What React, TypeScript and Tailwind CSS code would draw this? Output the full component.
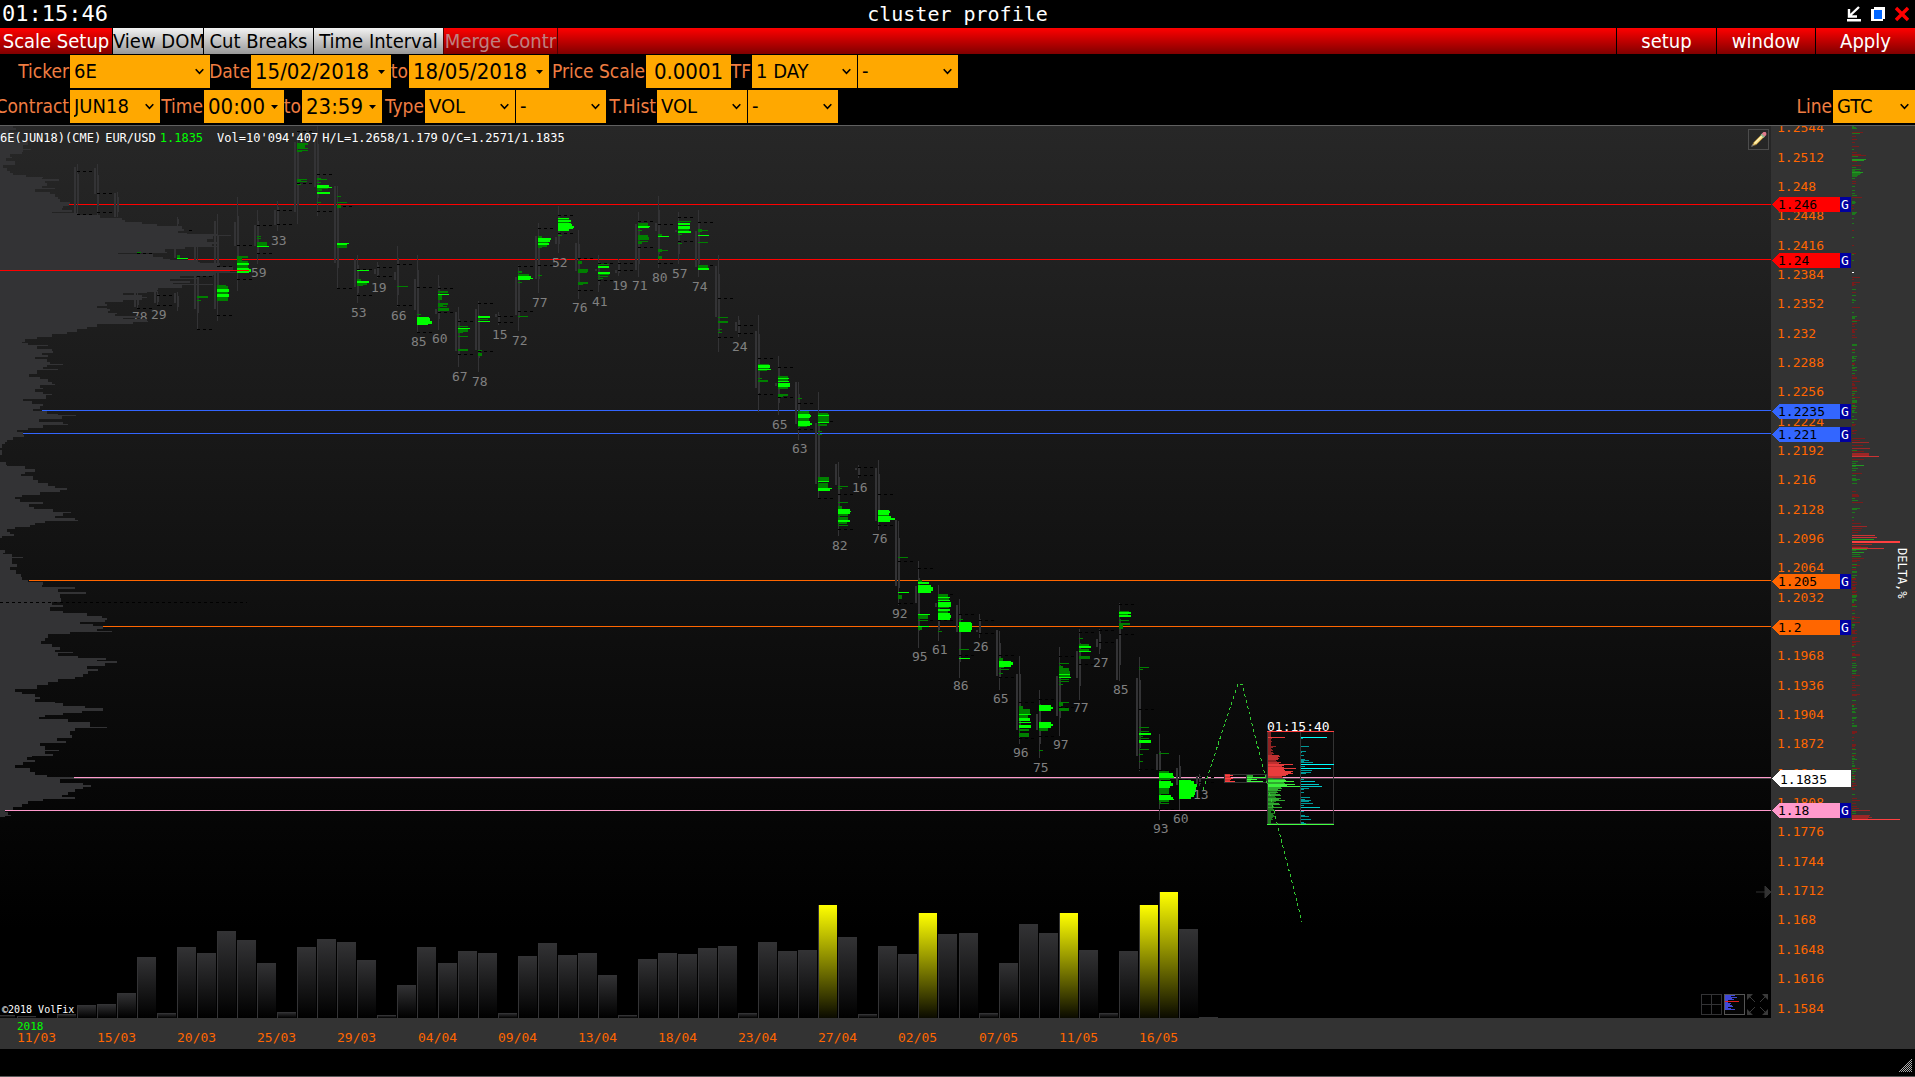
import { useState } from "react";
import type { ReactNode } from "react";

/* ---------- chart data (y measured in window pixels, shifted by TOP when drawn) ---------- */

const TOP = 126;
const FLOOR = 1018;
const MONO = "'DejaVu Sans Mono', 'Liberation Mono', monospace";

type Pt = [number, number];

/* Volume profile outline: x in thirds of a pixel, y in each list's own step */
const profileUpper: Pt[] = [[3,40],[10,48],[15,28],[22,55],[30,60],[40,48],[50,85],[60,70],[72,93],[75,70],[82,65],[88,30],[95,35],[100,18],[107,45],[115,45],[120,8],[128,20],[138,30],[145,40],[150,78],[155,130],[160,125],[163,177],[168,135],[175,140],[183,125],[190,165],[193,105],[200,150],[207,165],[215,175],[222,180],[232,210],[238,207],[243,190],[250,185],[255,215],[262,155],[265,235],[271,300],[278,365],[285,375],[292,425],[298,470],[303,545],[312,552],[318,535],[325,560],[328,650],[331,693],[334,640],[343,620],[350,655],[357,635],[362,655],[367,555],[372,495],[380,500],[384,355],[388,460],[396,490],[402,510],[406,590],[410,600],[415,660],[420,650],[427,700],[434,690],[440,710],[443,645],[450,640],[453,540],[458,590],[462,510],[468,570],[474,520],[477,640],[481,545],[489,475],[495,470],[500,440],[504,370],[510,425],[516,440],[520,425],[526,370],[530,315],[536,320],[543,292],[548,320],[553,330],[557,325],[563,350],[568,345],[573,420],[578,370],[583,440],[588,445],[592,400],[598,290],[606,260],[612,230],[620,200],[628,155],[637,110],[643,75],[650,65],[655,85],[660,145],[663,110],[672,155],[678,158],[683,125],[690,145],[696,105],[703,140],[710,150],[717,190],[720,140],[727,130],[733,175],[736,110],[747,88],[755,120],[762,145],[770,155],[776,165],[781,120],[788,130]];
const profileLower: Pt[] = [[0,130],[8,140],[11,190],[14,140],[22,175],[25,100],[36,88],[42,150],[46,105],[52,150],[60,165],[63,145],[68,105],[75,130],[81,155],[84,138],[93,68],[98,95],[105,130],[110,120],[116,100],[122,140],[128,175],[131,228],[134,185],[141,118],[147,190],[152,203],[155,130],[161,85],[167,52],[172,70],[178,72],[184,38],[190,20],[195,15],[200,5],[210,1],[215,5],[225,0],[238,0],[243,18],[250,22],[253,75],[258,105],[265,75],[271,62],[276,100],[285,115],[293,145],[300,165],[305,200],[309,180],[314,120],[320,65],[325,45],[330,60],[338,130],[341,88],[350,103],[355,160],[360,212],[363,190],[371,165],[376,225],[379,233],[382,135],[388,105],[393,90],[397,45],[401,22],[408,30],[413,42],[418,5],[422,0],[450,0],[452,15],[458,10],[462,35],[468,68],[471,35],[484,50],[492,30],[500,48],[508,62],[516,65],[522,85],[528,130],[534,125],[540,225],[543,175],[552,257],[555,180],[565,183],[574,155],[582,190],[588,150],[597,190],[602,260],[608,305],[612,320],[618,315],[622,240],[628,280],[633,310],[638,290],[644,335],[647,210],[651,145],[660,135],[668,122],[675,155],[682,180],[688,165],[693,218],[696,175],[703,235],[708,318],[712,290],[716,350],[720,315],[728,260],[734,293],[738,265],[747,250],[753,225],[758,175],[765,145],[773,110],[778,110],[782,45],[788,65],[794,105],[800,120],[806,105],[812,165],[816,190],[822,255],[828,310],[834,245],[838,190],[843,135],[848,118],[853,205],[860,270],[866,270],[872,322],[875,225],[882,210],[890,217],[897,170],[906,197],[909,120],[917,135],[926,178],[930,135],[937,160],[940,95],[944,80],[950,105],[955,70],[963,45],[970,90],[978,105],[985,140],[990,222],[996,180],[1004,250],[1010,272],[1014,250],[1020,225],[1027,205],[1033,185],[1039,225],[1043,130],[1049,85],[1055,65],[1062,40],[1070,15],[1075,25],[1080,32],[1083,15],[1087,0]];

const profile: Pt[] = [
  ...profileUpper.map(([p, x]): Pt => [Math.round(125 + p / 3), Math.round(x / 3)]),
  ...profileLower.map(([p, x]): Pt => [Math.round(360 + p / 2.376), Math.round(x / 3)]).filter(([y]) => y > 388),
];
const profilePath =
  `M0 ${TOP}` + profile.map(([y, x]) => `V${y}H${x}`).join("") + "V818H0Z";

/* bars: [y, height, width, bright] */
type Bar = [number, number, number, 0 | 1];
interface Candle {
  x: number;
  wick: Pt;
  body: Pt;
  va: number[];
  bars?: Bar[];
  label?: string;
  base?: number;
}
const c = (x: number, wick: Pt, body: Pt, va: number[], bars: Bar[] = [], label?: string, base?: number): Candle => ({ x, wick, body, va, bars, label, base });

const candles: Candle[] = [
  c(77,[164,214],[167,213],[171,214]),
  c(97,[164,217],[168,194],[193,212]),
  c(117,[192,217],[193,217],[]),
  c(137,[292,308],[293,307],[253,308],[[252,1,4,0]]),
  c(157,[291,305],[291,303],[295,305],[],"29",319),
  c(177,[217,226],[249,258],[],[[255,3,3,0],[258,1,11,1]]),
  c(177,[292,311],[293,303],[]),
  c(197,[247,329],[247,309],[276,329],[[296,2,11,0],[300,1,4,0]]),
  c(217,[214,321],[221,309],[266,315],[[285,1,9,0],[286,15,11,0],[289,3,12,1],[294,3,12,1]]),
  c(237,[197,291],[222,246],[245,279],[[256,2,11,0],[258,4,5,0],[261,7,11,0],[263,2,12,1],[268,1,12,1],[269,3,14,1],[272,1,12,1]],"59",277),
  c(257,[210,264],[225,246],[225,253],[[236,1,4,0],[238,1,4,0],[242,4,10,0],[246,1,12,1]],"33",245),
  c(277,[201,231],[210,225],[210,224]),
  c(297,[131,224],[142,212],[131,183],[[143,2,11,0],[145,3,8,0],[148,1,11,0],[150,1,11,0],[151,1,5,0],[179,1,10,0],[180,2,4,0],[181,1,10,0],[184,1,4,0]]),
  c(317,[126,216],[142,187],[174,211],[[178,2,4,0],[179,1,10,0],[182,1,4,0],[185,2,12,1],[187,1,15,1],[188,1,11,0],[189,2,5,0],[192,2,13,1],[202,1,4,0]]),
  c(337,[186,288],[186,263],[206,288],[[196,1,4,0],[202,1,10,0],[205,3,4,0],[243,1,12,1],[244,1,10,1],[245,3,10,0]]),
  c(357,[255,303],[259,287],[269,295],[[270,1,12,1],[279,2,4,0],[281,2,12,1],[283,2,10,0],[285,1,6,0]],"53",317),
  c(377,[262,278],[269,274],[267,276],[],"19",292),
  c(397,[246,307],[272,280],[264,305],[[286,1,11,0]],"66",320),
  c(417,[255,332],[279,310],[287,332],[[314,1,4,0],[317,1,12,1],[318,3,13,1],[321,3,15,1],[324,1,11,1]],"85",346),
  c(438,[275,330],[309,314],[288,312],[[291,2,10,0],[294,1,11,1],[295,5,4,0],[303,2,10,0],[305,2,5,0],[306,1,9,0],[308,3,11,0]],"60",343),
  c(458,[307,367],[312,351],[321,354],[[326,1,10,0],[328,1,12,1],[329,3,10,0],[332,1,5,0],[336,1,10,0],[349,2,10,0]],"67",381),
  c(478,[301,372],[309,350],[303,351],[[316,2,12,1],[319,1,10,0],[321,1,12,1],[350,1,4,0],[353,3,4,0]],"78",386),
  c(498,[312,325],[314,317],[316,322],[],"15",339),
  c(518,[265,331],[277,315],[266,311],[[271,2,4,0],[274,2,11,0],[276,2,13,1],[278,1,15,1],[279,1,12,1],[282,1,4,0],[316,1,10,0]],"72",345),
  c(538,[223,293],[236,279],[228,265],[[236,2,4,0],[238,2,13,1],[240,2,12,1],[242,1,10,0],[243,2,11,1],[245,2,9,0],[247,1,4,0],[275,1,4,0]],"77",307),
  c(558,[206,253],[237,244],[215,233],[[218,1,11,1],[219,1,11,0],[220,2,13,1],[222,1,11,0],[223,1,13,1],[224,2,14,1],[226,2,16,1],[228,1,15,1],[229,2,11,1],[235,1,4,0]],"52",267),
  c(578,[230,299],[243,271],[258,290],[[261,3,4,0],[269,3,10,0],[272,1,9,0],[282,2,10,0],[284,1,5,0]],"76",312),
  c(598,[255,292],[269,271],[263,280],[[264,1,11,0],[266,2,11,1],[272,2,12,1],[274,1,11,0],[276,1,10,0],[278,1,5,0]],"41",306),
  c(618,[259,276],[270,273],[263,270],[],"19",290),
  c(638,[212,277],[224,270],[221,247],[[223,3,10,0],[226,1,12,1],[227,1,11,1],[230,1,4,0],[235,3,10,0],[237,3,11,0],[241,1,10,0],[242,2,4,0]],"71",290),
  c(658,[196,268],[223,231],[224,263],[[234,2,4,0],[236,1,11,1],[250,1,10,0],[249,3,4,0],[256,3,4,0]],"80",282),
  c(678,[212,264],[230,232],[217,241],[[221,1,13,0],[223,2,12,1],[226,3,12,1],[229,2,11,0],[231,2,13,1],[234,1,4,0],[243,1,4,0]],"57",278),
  c(698,[210,277],[231,267],[222,265],[[229,3,4,0],[230,1,10,0],[235,1,11,1],[242,1,10,0],[265,3,10,0],[268,2,11,1]],"74",291),
  c(718,[255,352],[266,317],[298,337],[[317,1,10,0],[321,2,10,0],[329,1,4,0],[332,1,4,0]]),
  c(738,[316,337],[322,331],[325,333],[],"24",351),
  c(758,[315,412],[331,388],[358,394],[[364,6,11,0],[365,3,12,1],[369,1,13,1],[370,1,9,0],[378,1,4,0],[380,2,10,0]]),
  c(778,[356,415],[383,386],[367,397],[[376,6,10,0],[378,1,11,1],[381,1,11,1],[383,4,12,1],[387,2,10,0],[394,2,10,0],[396,1,5,0]],"65",429),
  c(798,[382,440],[382,424],[403,429],[[398,1,4,0],[411,3,11,0],[414,1,12,1],[415,2,13,1],[417,1,12,1],[418,3,11,0],[421,2,12,1],[423,2,14,1],[425,1,12,1],[426,1,9,0]],"63",453),
  c(818,[392,499],[423,484],[421,498],[[413,1,10,0],[414,9,11,0],[415,1,11,1],[422,1,11,1],[424,2,9,0],[431,1,4,0],[434,1,4,0],[477,5,11,0],[481,1,11,1],[483,5,10,0],[488,1,14,1],[489,2,12,1]]),
  c(838,[462,536],[464,485],[494,529],[[486,1,10,0],[488,1,4,0],[502,1,10,0],[506,3,4,0],[509,2,12,1],[511,1,13,1],[512,2,12,1],[514,2,10,0],[517,3,10,0],[520,2,12,1],[522,2,9,0],[525,1,10,0]],"82",550),
  c(858,[465,478],[468,470],[467,475],[],"16",492),
  c(878,[460,530],[468,521],[494,525],[[510,1,11,1],[511,2,12,1],[513,2,11,1],[515,1,11,0],[516,2,13,1],[518,2,17,1],[520,2,12,1]],"76",543),
  c(898,[521,605],[520,586],[561,603],[[557,1,10,0],[592,1,11,1],[595,4,4,0]],"92",618),
  c(918,[561,648],[586,603],[568,620],[[580,2,4,0],[582,2,11,1],[585,2,13,1],[587,4,15,1],[591,2,13,1],[614,1,12,1],[615,2,10,0],[617,2,10,0],[620,1,10,0],[626,1,11,1],[627,3,4,0]],"95",661),
  c(938,[585,641],[603,607],[594,620],[[594,3,10,0],[597,1,12,1],[598,2,11,0],[600,1,12,1],[602,5,13,1],[607,1,11,0],[609,2,12,1],[611,2,10,0],[613,2,12,1],[615,3,13,1],[618,2,12,1],[631,1,4,0]],"61",654),
  c(959,[599,678],[605,632],[614,655],[[619,1,4,0],[622,1,12,1],[623,7,13,1],[630,2,12,1],[649,1,10,0],[658,1,11,1]],"86",690),
  c(979,[614,638],[630,632],[620,633],[],"26",651),
  c(999,[631,690],[630,676],[655,677],[[658,3,4,0],[661,1,12,1],[662,3,14,1],[665,2,12,1],[667,1,5,0],[669,1,10,0],[673,1,4,0]],"65",703),
  c(1019,[656,744],[674,730],[702,738],[[706,3,4,0],[709,5,11,0],[714,1,12,1],[715,3,9,0],[718,3,11,1],[722,1,12,1],[725,3,12,1],[729,2,10,0],[733,4,10,0]],"96",757),
  c(1039,[690,758],[714,730],[699,736],[[705,2,12,1],[707,2,14,1],[709,2,12,1],[722,2,12,1],[724,2,14,1],[726,2,12,1],[728,3,9,0],[750,1,4,0]],"75",772),
  c(1059,[647,736],[676,716],[656,707],[[663,1,10,0],[666,2,4,0],[668,3,10,0],[671,6,11,0],[674,1,11,1],[677,1,12,1],[679,1,10,0],[681,1,10,0],[684,1,4,0],[702,1,10,0],[703,3,4,0],[708,3,10,0]],"97",749),
  c(1079,[629,700],[651,678],[632,664],[[638,1,4,0],[644,2,10,0],[646,2,12,1],[649,2,10,0],[651,1,12,1],[656,3,11,0]],"77",712),
  c(1099,[629,654],[639,647],[630,642],[],"27",667),
  c(1119,[603,681],[639,680],[604,634],[[611,1,10,0],[612,2,12,1],[614,1,9,0],[615,2,12,1],[620,1,10,0],[623,2,11,0],[625,4,4,0]],"85",694),
  c(1139,[657,771],[678,756],[709,769],[[667,1,10,0],[669,1,4,0],[727,1,10,0],[731,1,10,0],[733,2,12,1],[736,1,4,0],[738,1,10,0],[740,3,12,1],[749,1,10,0],[754,1,4,0],[761,1,4,0]]),
  c(1159,[734,820],[754,770],[770,809],[[753,1,10,0],[771,2,10,0],[773,3,14,1],[776,2,15,1],[778,2,11,0],[781,2,12,1],[783,3,14,1],[786,2,11,1],[788,6,10,0],[790,2,4,0],[795,2,12,1],[797,2,14,1],[799,1,15,1],[800,2,10,0],[803,1,10,0]],"93",833),
  c(1179,[755,810],[768,785],[779],[[780,2,12,1],[781,3,15,1],[784,3,18,1],[787,5,17,1],[792,3,16,1],[795,2,15,1],[797,2,12,1]],"60",823),
  c(1199,[774,786],[776,784],[777,782],[],"13",799),
];

/* Volume histogram: [x, height, highlighted] */
const volumes: [number, number, (0 | 1)?][] = [
  [-4,3],[17,2],[57,4],[77,13],[97,14],[117,25],[137,61],[157,5],[177,71],[197,65],[217,87],[237,78],[257,55],[277,6],[297,71],[317,79],[337,76],[357,58],[377,3],[397,33],[417,71],[438,55],[458,67],[478,65],[498,5],[518,62],[538,75],[558,63],[578,65],[598,43],[618,3],[638,59],[658,65],[678,64],[698,70],[718,72],[738,5],[758,76],[778,67],[798,68],[818,113,1],[838,81],[858,4],[878,72],[898,64],[918,105,1],[938,84],[959,85],[979,5],[999,55],[1019,94],[1039,85],[1059,105,1],[1079,68],[1099,5],[1119,67],[1139,113,1],[1159,126,1],[1179,89],[1199,1],
];

const dates: [number, string][] = [
  [17,"11/03"],[97,"15/03"],[177,"20/03"],[257,"25/03"],[337,"29/03"],[418,"04/04"],[498,"09/04"],[578,"13/04"],[658,"18/04"],[738,"23/04"],[818,"27/04"],[898,"02/05"],[979,"07/05"],[1059,"11/05"],[1139,"16/05"],
];

interface Level { price: string; line: number; from: number; tag: number; color: string }
const levels: Level[] = [
  { price: "1.246", line: 204, from: 69, tag: 197, color: "#ff0000" },
  { price: "1.24", line: 259, from: 188, tag: 253, color: "#ff0000" },
  { price: "1.2235", line: 410, from: 42, tag: 404, color: "#3366ff" },
  { price: "1.221", line: 433, from: 23, tag: 427, color: "#3366ff" },
  { price: "1.205", line: 580, from: 29, tag: 574, color: "#ff6600" },
  { price: "1.2", line: 626, from: 103, tag: 620, color: "#ff6600" },
  { price: "1.18", line: 810, from: 5, tag: 803, color: "#ff99cc" },
];

const prices = Array.from({ length: 31 }, (_, i) => ({
  text: String(Number((1.2544 - i * 0.0032).toFixed(4))),
  y: Math.round(132.3 + i * 29.34),
}));

/* Delta histogram: [y, width, red] */
const deltas: [number, number, 0 | 1][] = [
  [126,2,0],[127,4,0],[128,5,0],[132,11,1],[133,8,0],[136,4,1],[139,5,1],[142,3,1],[146,7,1],[149,2,0],[152,5,1],[154,9,1],[155,14,1],[156,6,0],[159,14,0],[160,12,0],[161,5,1],[165,9,1],[167,4,0],[169,9,0],[170,3,0],[171,8,0],[172,11,0],[173,9,0],[174,8,0],[175,6,0],[176,5,0],[178,3,0],[181,4,1],[183,4,1],[186,3,0],[190,3,0],[193,3,0],[195,5,0],[197,10,1],[201,3,0],[202,4,0],[203,3,0],[205,2,1],[208,2,1],[212,5,0],[213,4,0],[214,3,0],[218,2,0],[223,2,0],[230,2,1],[237,2,0],[245,2,1],[253,4,1],[254,2,0],[260,2,0],
  [438,13,1],[440,8,1],[442,17,1],[445,11,1],[448,18,1],[450,5,0],[451,12,1],[453,17,1],[454,17,1],[455,17,1],[456,27,1],[459,12,1],[461,6,0],[463,4,0],[465,12,0],[466,4,0],[468,6,0],[470,4,0],[473,10,1],[475,4,0],[478,4,0],[479,8,0],[480,5,0],[483,5,0],[491,4,1],[494,6,1],[495,7,1],[496,7,1],[498,3,0],[500,6,0],[502,11,1],[508,8,0],[509,5,0],[512,3,0],[517,2,0],[520,2,1],[523,9,1],[526,15,1],[528,10,1],[530,9,1],[532,6,1],[535,23,1],[537,25,1],[539,22,0],[541,48,1],[542,48,1],[544,20,1],[546,9,1],[547,16,1],[548,32,1],[549,15,0],[550,4,0],[552,12,0],[554,8,0],[556,9,0],[558,12,1],[560,8,1],[561,5,1],
  [794,3,0],[798,5,1],[800,8,1],[803,4,1],[806,5,1],[808,7,1],[810,18,1],[811,4,0],[813,4,0],[815,18,1],[816,17,1],[817,20,1],[818,16,1],[819,48,1],
];
const quietDeltas: [number, number, 0 | 1][] = [];
for (let y = 276; y < 790; y += 1) {
  if (y > 434 && y < 563) continue;
  const h = (y * 7919 + ((y * y) % 97) * 31) % 23;
  if (h < 12) quietDeltas.push([y, h < 1 ? 8 : h < 4 ? 5 : 2 + (h % 3), Math.floor(y / 17) % 3 === 1 || h % 5 === 0 ? 1 : 0]);
}

const deltaColor = (w: number, red: 0 | 1) =>
  red ? (w > 40 ? "#ff4040" : w > 22 ? "#cc3333" : w > 14 ? "#9c2626" : "#781b1b") : w > 10 ? "#219a21" : "#1c781c";

/* Order-flow box: keyed rows in thirds of a pixel */
const askRows: Pt[] = [[515,8],[522,8],[531,55],[534,12],[545,10],[558,28],[561,15],[575,18],[585,37],[590,35],[598,30],[605,38],[612,78],[615,48],[621,50],[624,85],[628,55],[634,75],[640,78],[643,60],[648,45],[653,0]];
const bidRows: Pt[] = [[655,20],[658,55],[663,85],[667,50],[672,88],[676,60],[679,97],[682,45],[688,30],[691,45],[694,30],[702,38],[708,28],[714,38],[720,55],[723,25],[730,35],[734,20],[741,42],[744,20],[753,12],[760,22],[766,20],[775,15],[780,10],[792,0]];
const expand = (rows: Pt[]) => {
  const out: Pt[] = [];
  for (let i = 0; i < rows.length - 1; i++)
    for (let y = Math.round(560 + rows[i][0] / 3); y < Math.round(560 + rows[i + 1][0] / 3); y++)
      out.push([y, Math.max(3, Math.round(rows[i][1] / 3) - ((y * 5) % 3))]);
  return out;
};
const speedRows: Pt[] = [[532,78],[535,5],[559,24],[574,15],[578,4],[586,8],[598,12],[601,24],[604,9],[607,35],[613,100],[619,12],[625,90],[631,33],[637,30],[640,15],[658,8],[664,42],[672,55],[679,62],[685,24],[688,10],[697,10],[712,27],[718,12],[721,30],[724,25],[730,35],[736,8],[742,57],[754,8],[766,12],[769,24],[778,30],[787,8],[790,15]];

const askColor = (w: number) => (w > 15 ? "#e83c3c" : w > 9 ? "#c03030" : "#8e2323");
const bidColor = (w: number) => (w > 17 ? "#3cf03c" : w > 9 ? "#2fa82f" : "#217a21");

/* ---------- chart ---------- */

function ChartCanvas() {
  return (
    <svg className="absolute inset-0 h-full w-full" shapeRendering="crispEdges" role="img" aria-label="Cluster profile chart">
      <defs>
        <linearGradient id="vol" x1="0" y1="0" x2="0" y2="1">
          <stop offset="0" stopColor="#333335" />
          <stop offset="1" stopColor="#000" />
        </linearGradient>
        <linearGradient id="volHot" x1="0" y1="0" x2="0" y2="1">
          <stop offset="0" stopColor="#ffff00" />
          <stop offset="1" stopColor="#0a0a00" />
        </linearGradient>
      </defs>
      <svg y={-TOP} width="100%" height="1200" overflow="visible">
        <g fontFamily={MONO} fontSize="13" fill="#808080">
          <text x="132" y="321">78</text>
        </g>
        <path d={profilePath} fill="#333335" />
        <line x1="0" x2="247" y1="602.5" y2="602.5" stroke="#000" strokeDasharray="3 3" />

        {levels.map((l) => (
          <rect key={l.price} x={l.from} y={l.line} width="100%" height="1" fill={l.color} />
        ))}
        <rect x="74" y="777" width="100%" height="1" fill="#ff99cc" />
        <rect x="74" y="778" width="100%" height="1" fill="#444" />

        {candles.map((k, i) => (
          <g key={i}>
            <rect x={k.x - 3} y={k.body[0]} width="2" height={k.body[1] - k.body[0]} fill="#333335" />
            <rect x={k.x} y={k.wick[0]} width="1" height={k.wick[1] - k.wick[0]} fill="#333335" />
            <rect x={k.x} y={k.wick[0] + (k.wick[1] - k.wick[0]) * 0.2} width="2" height={(k.wick[1] - k.wick[0]) * 0.6} fill="#333335" />
            {k.va.map((y) => (
              <line key={y} x1={k.x} x2={k.x + 15} y1={y + 0.5} y2={y + 0.5} stroke="#000" strokeDasharray="3 3" />
            ))}
            {k.bars?.map(([y, h, w, b], j) => (
              <rect key={j} x={k.x} y={y} width={w} height={h} fill={b ? "#00ff00" : "#008000"} />
            ))}
          </g>
        ))}
        <rect x="189" y="230" width="3" height="1" fill="#000" />
        <rect x="0" y="270" width="249" height="1" fill="#ff0000" />

        <g fontFamily={MONO} fontSize="13" fill="#808080">
          {candles.map((k, i) => k.label && (
            <text key={i} x={k.label === "59" ? 251 : k.label === "33" ? 271 : k.x - 6} y={k.base}>{k.label}</text>
          ))}
        </g>

        {volumes.map(([x, h, hot]) => (
          <g key={x}>
            <rect x={x} y={FLOOR - h} width="19" height={h} fill={hot ? "url(#volHot)" : "url(#vol)"} />
            <rect x={x} y={FLOOR - h} width="1" height={h} fill="#333335" />
            {!hot && <rect x={x} y={FLOOR - h} width="19" height="1" fill="#333335" />}
          </g>
        ))}

        {/* order-flow boxes */}
        <rect x="1224.5" y="774.5" width="22" height="8" fill="none" stroke="#333" />
        <rect x="1246.5" y="774.5" width="20" height="8" fill="none" stroke="#333" />
        {[[774,5],[775,8],[776,5],[777,6],[778,8],[779,6],[780,5],[781,10]].map(([y, w]) => (
          <rect key={y} x="1225" y={y} width={w} height="1" fill={w > 7 ? "#ff4040" : "#d03535"} />
        ))}
        {[[775,6],[776,6],[777,18],[778,5],[779,10],[780,4],[781,16]].map(([y, w]) => (
          <rect key={y} x="1247" y={y} width={w} height="1" fill={w > 9 ? "#40ff40" : "#2fa82f"} />
        ))}
        <rect x="1267.5" y="731.5" width="33" height="92" fill="none" stroke="#333" />
        <rect x="1300.5" y="731.5" width="33" height="92" fill="none" stroke="#333" />
        {expand(askRows).map(([y, w]) => <rect key={y} x="1268" y={y} width={w} height="1" fill={askColor(w)} />)}
        {expand(bidRows).map(([y, w]) => <rect key={y} x="1268" y={y} width={w} height="1" fill={bidColor(w)} />)}
        {speedRows.map(([p, w]) => (
          <rect key={p} x="1301" y={Math.round(559.5 + p / 3)} width={Math.round(w / 3)} height="1" fill={w > 70 ? "#00ffff" : w > 40 ? "#00c8c8" : "#009999"} />
        ))}
        <rect x="1267" y="731" width="67" height="1" fill="#ff4040" />
        <rect x="1267" y="824" width="67" height="1" fill="#40ff40" />
        <path d="M1203 790 L1238 684 H1242 L1302 922" fill="none" stroke="#32cd32" strokeDasharray="3 3" />
        <text x="1267" y="731" fontFamily={MONO} fontSize="13" fill="#fff">01:15:40</text>
      </svg>
    </svg>
  );
}

function PriceAxis() {
  return (
    <svg className="absolute inset-0 h-full w-full" shapeRendering="crispEdges" role="img" aria-label="Price axis">
      <g transform={`translate(-1771 ${-TOP})`} fontFamily={MONO} fontSize="13">
        {prices.map((p) => <text key={p.text} x="1777" y={p.y} fill="#ff6600">{p.text}</text>)}
        {[...quietDeltas, ...deltas].map(([y, w, red], i) => (
          <rect key={i} x="1852" y={y} width={w} height="1" fill={deltaColor(w, red)} />
        ))}
        <rect x="1852" y="272" width="2" height="1" fill="#fff" />
        {levels.map((l) => (
          <g key={l.price}>
            <path d={`M1772 ${l.tag + 7.5}l7 -7.5H1840v15H1779z`} fill={l.color} />
            <rect x="1840" y={l.tag} width="11" height="15" fill="#0000a0" />
            <text x="1778" y={l.tag + 12} fill="#000">{l.price}</text>
            <text x="1841" y={l.tag + 12} fill="#fff">G</text>
          </g>
        ))}
        <path d="M1772 778.500l8 -8.500H1851v17H1780z" fill="#fff" />
        <text x="1780" y="784" fill="#000">1.1835</text>
        <text transform="translate(1898 548) rotate(90)" fontSize="12" fill="#fff">DELTA,%</text>
      </g>
    </svg>
  );
}

/* ---------- icons ---------- */

const PencilIcon = () => (
  <svg width="19" height="19" viewBox="0 0 19 19">
    <path d="M3 16l2-4 8-8 2.500 2.500-8 8z" fill="#f0d27a" stroke="#8a6a2a" strokeWidth="0.8" />
    <path d="M5.500 13.500l8-8" stroke="#fff3b8" strokeWidth="1.200" />
    <path d="M11.500 5L13 3.500l3 3L14.500 8z" fill="#8fb58f" />
    <path d="M12.800 3.800l1.700-1.700h2l.8.800v2l-1.600 1.600z" fill="#e07a8c" />
    <path d="M2 17l1.400-3 1.700 1.700z" fill="#777" />
  </svg>
);
const GridIcon = () => (
  <svg width="21" height="21" viewBox="0 0 21 21" fill="none" stroke="#333335" shapeRendering="crispEdges">
    <path d="M.5.5h20v20H.5zM10.500 0v21M0 10.500h21" />
  </svg>
);
const ProfileIcon = () => (
  <svg width="21" height="21" viewBox="0 0 21 21" shapeRendering="crispEdges">
    <rect x=".5" y=".5" width="20" height="20" fill="#050505" stroke="#555" />
    <path d="M1 1h10v1H1zM1 2h6v1H1zM1 3h12v1H1zM1 4h7v1H1zM1 5h9v1H1zM1 6h3v1H1zM1 8h3v1H1zM1 9h6v1H1zM1 10h5v1H1zM1 11h7v1H1zM1 12h8v1H1zM1 13h3v1H1zM1 14h6v1H1zM1 15h10v1H1z" fill="#4048d8" />
    <path d="M1 7h14v1H1z" fill="#e02020" />
  </svg>
);
const ExpandIcon = () => (
  <svg width="21" height="21" viewBox="0 0 21 21">
    <path d="M3 3l5 5M18 3l-5 5M3 18l5-5M18 18l-5-5" stroke="#3a3a3a" />
    <path d="M0 0h6L0 6zM21 0v6l-6-6zM0 21v-6l6 6zM21 21h-6l6-6z" fill="#3a3a3a" />
  </svg>
);

/* ---------- form controls ---------- */

const fieldBox = "relative h-[33px] shrink-0 bg-[#ffa800]";
const valueText = "h-full w-full appearance-none rounded-none bg-transparent pl-1 leading-[33px] text-black outline-none";

function Caption({ htmlFor, width, children }: { htmlFor: string; width: string; children: ReactNode }) {
  return (
    <label htmlFor={htmlFor} className={`${width} flex shrink-0 items-center justify-end whitespace-nowrap pr-px text-[19px] text-[#ef7d42]`}>
      {children}
    </label>
  );
}

function Choice({ id, width, value, label }: { id: string; width: string; value: string; label?: string }) {
  return (
    <div className={`${fieldBox} ${width}`}>
      <select id={id} aria-label={label} defaultValue={value} className={`${valueText} text-[20px]`}>
        <option>{value}</option>
      </select>
      <svg className="pointer-events-none absolute top-3 right-1.5" width="9" height="9" viewBox="0 0 9 9" fill="none" stroke="#000" strokeWidth="1.600">
        <path d="M.7 2.300l3.800 4 3.800-4" />
      </svg>
    </div>
  );
}

function Picker({ id, width, value, label }: { id: string; width: string; value: string; label?: string }) {
  const [v, setV] = useState(value);
  return (
    <div className={`${fieldBox} ${width} flex`}>
      <input id={id} aria-label={label} value={v} onChange={(e) => setV(e.target.value)} className={`${valueText} text-[22px]`} />
      <button type="button" aria-label="Open picker" className="absolute top-0 right-1.5 flex h-full items-center">
        <svg width="7" height="4" viewBox="0 0 7 4"><path d="M0 0h7L3.500 4z" /></svg>
      </button>
    </div>
  );
}

const tab = "h-full shrink-0 whitespace-nowrap text-center text-[20px] leading-[25px]";
const silver = "bg-linear-to-b/srgb from-[#f2f2f2] to-[#989898] text-black";
const redBar = "bg-linear-to-b/srgb from-[#ff0000] to-[#800000]";

export default function App() {
  return (
    <div className="flex h-screen flex-col overflow-hidden border-b border-[#5a5a5a] bg-black font-['DejaVu_Sans_Condensed','DejaVu_Sans',sans-serif] text-white">
      <header className="grid h-7 shrink-0 grid-cols-3 items-center font-['DejaVu_Sans_Mono','Liberation_Mono',monospace]">
        <time className="pl-0.5 text-[22px] leading-6">01:15:46</time>
        <h1 className="text-center text-[20px] leading-7">cluster profile</h1>
        <div className="flex justify-end gap-2.5 pr-1.5">
          <button aria-label="Minimise">
            <svg width="14" height="16" viewBox="0 0 14 16"><path d="M12 1L3 9.500M2 3v7.500h8" fill="none" stroke="#fff" strokeWidth="2.400" /><path d="M0 13h14v2.500H0z" fill="#fff" /></svg>
          </button>
          <button aria-label="Restore">
            <svg width="14" height="16" viewBox="0 0 14 16"><path d="M3 1h11v12h-2v2H0V3h3z" fill="#fff" /><path d="M3 4h8v9H3z" fill="#0066ff" /></svg>
          </button>
          <button aria-label="Close">
            <svg width="14" height="16" viewBox="0 0 14 16"><path d="M1 2l12 12M13 2L1 14" stroke="#ff0000" strokeWidth="3.400" /></svg>
          </button>
        </div>
      </header>

      <nav className={`flex h-[26px] shrink-0 ${redBar}`}>
        <button className={`${tab} w-28`}>Scale Setup</button>
        <button className={`${tab} ${silver} w-[91px] border-l border-black`}>View DOM</button>
        <button className={`${tab} ${silver} w-[110px] border-l border-black`}>Cut Breaks</button>
        <button className={`${tab} ${silver} w-[130px] border-l border-black`}>Time Interval</button>
        <button className={`${tab} w-[115px] border-x border-[#500000] text-[#c08080]`}>Merge Contr</button>
        <div className="flex-1" />
        <button className={`${tab} w-[100px] border-l border-black`}>setup</button>
        <button className={`${tab} w-[99px] border-l border-black`}>window</button>
        <button className={`${tab} w-[100px] border-l border-black`}>Apply</button>
      </nav>

      <form className="flex shrink-0 flex-col gap-0.5 pt-px pb-0.5" onSubmit={(e) => e.preventDefault()}>
        <div className="flex">
          <Caption htmlFor="ticker" width="w-[70px]">Ticker</Caption>
          <Choice id="ticker" width="w-[140px]" value="6E" />
          <Caption htmlFor="date-from" width="w-[41px]">Date</Caption>
          <Picker id="date-from" width="w-[140px]" value="15/02/2018" />
          <Caption htmlFor="date-to" width="w-[18px]">to</Caption>
          <Picker id="date-to" width="w-[140px]" value="18/05/2018" />
          <Caption htmlFor="scale" width="w-[97px]">Price Scale</Caption>
          <div className={`${fieldBox} w-[85px]`}>
            <input id="scale" defaultValue="0.0001" className={`${valueText} pr-1 text-center text-[22px]`} />
          </div>
          <Caption htmlFor="tf" width="w-[21px]">TF</Caption>
          <Choice id="tf" width="w-[105px]" value="1 DAY" />
          <span className="w-px" />
          <Choice id="tf-2" label="Second time frame" width="w-[100px]" value="-" />
        </div>
        <div className="flex">
          <Caption htmlFor="contract" width="w-[70px]">Contract</Caption>
          <Choice id="contract" width="w-[90px]" value="JUN18" />
          <Caption htmlFor="time-from" width="w-[44px]">Time</Caption>
          <Picker id="time-from" width="w-[80px]" value="00:00" />
          <Caption htmlFor="time-to" width="w-[18px]">to</Caption>
          <Picker id="time-to" width="w-[80px]" value="23:59" />
          <Caption htmlFor="type" width="w-[43px]">Type</Caption>
          <Choice id="type" width="w-[90px]" value="VOL" />
          <span className="w-px" />
          <Choice id="type-2" label="Second type" width="w-[90px]" value="-" />
          <Caption htmlFor="hist" width="w-[51px]">T.Hist</Caption>
          <Choice id="hist" width="w-[90px]" value="VOL" />
          <span className="w-px" />
          <Choice id="hist-2" label="Second histogram" width="w-[90px]" value="-" />
          <div className="flex-1" />
          <Caption htmlFor="line" width="w-[44px]">Line</Caption>
          <Choice id="line" width="w-[82px]" value="GTC" />
        </div>
      </form>

      <main className="flex min-h-0 flex-1 border-t border-[#606060] font-['DejaVu_Sans_Mono','Liberation_Mono',monospace]">
        <section className="flex min-w-0 flex-1 flex-col">
          <div className="relative flex-1 overflow-hidden bg-linear-to-b/srgb from-[#272727] to-black to-90%">
            <ChartCanvas />
            <p className="absolute top-1 left-0 flex gap-1 whitespace-nowrap text-[12px] leading-4">
              <span>6E(JUN18)(CME)</span>
              <span>EUR/USD</span>
              <span className="text-[#00ff00]">1.1835</span>
              <span className="pl-2.5">Vol=10'094'407</span>
              <span>H/L=1.2658/1.179</span>
              <span>O/C=1.2571/1.1835</span>
            </p>
            <button aria-label="Draw" className="absolute top-[3px] right-0.5 flex size-[21px] items-center justify-center border border-[#4c4c4c]">
              <PencilIcon />
            </button>
            <small className="absolute bottom-0 left-0.5 text-[10px] leading-4">©2018 VolFix</small>
            <svg className="absolute right-0 bottom-[120px]" width="15" height="12" viewBox="0 0 15 12"><path d="M0 6h9M9 0l6 6-6 6z" fill="#333" stroke="#333" /></svg>
            <div className="absolute right-[3px] bottom-[3px] flex gap-0.5">
              <button aria-label="Grid"><GridIcon /></button>
              <button aria-label="Profile"><ProfileIcon /></button>
              <button aria-label="Fit"><ExpandIcon /></button>
            </div>
          </div>
          <div className="relative h-[31px] shrink-0 overflow-hidden bg-[#333]">
            <svg className="absolute inset-0 h-full w-full" fontFamily={MONO} role="img" aria-label="Date axis">
              <text x="17" y="12" fontSize="11" fill="#00ff00">2018</text>
              {dates.map(([x, d]) => <text key={d} x={x} y="24" fontSize="13" fill="#ff6600">{d}</text>)}
            </svg>
          </div>
        </section>
        <aside className="relative w-36 shrink-0 overflow-hidden bg-[#333]">
          <PriceAxis />
        </aside>
      </main>

      <footer className="flex h-[27px] shrink-0 items-end justify-end pr-[3px] pb-1">
        <svg width="15" height="15" viewBox="0 0 15 15" shapeRendering="crispEdges">
          <defs>
            <pattern id="dots" width="2" height="2" patternUnits="userSpaceOnUse"><path d="M0 0h1v1H0zM1 1h1v1H1z" fill="#aaa" /></pattern>
          </defs>
          <path d="M15 0v15H0z" fill="url(#dots)" />
        </svg>
      </footer>
    </div>
  );
}
